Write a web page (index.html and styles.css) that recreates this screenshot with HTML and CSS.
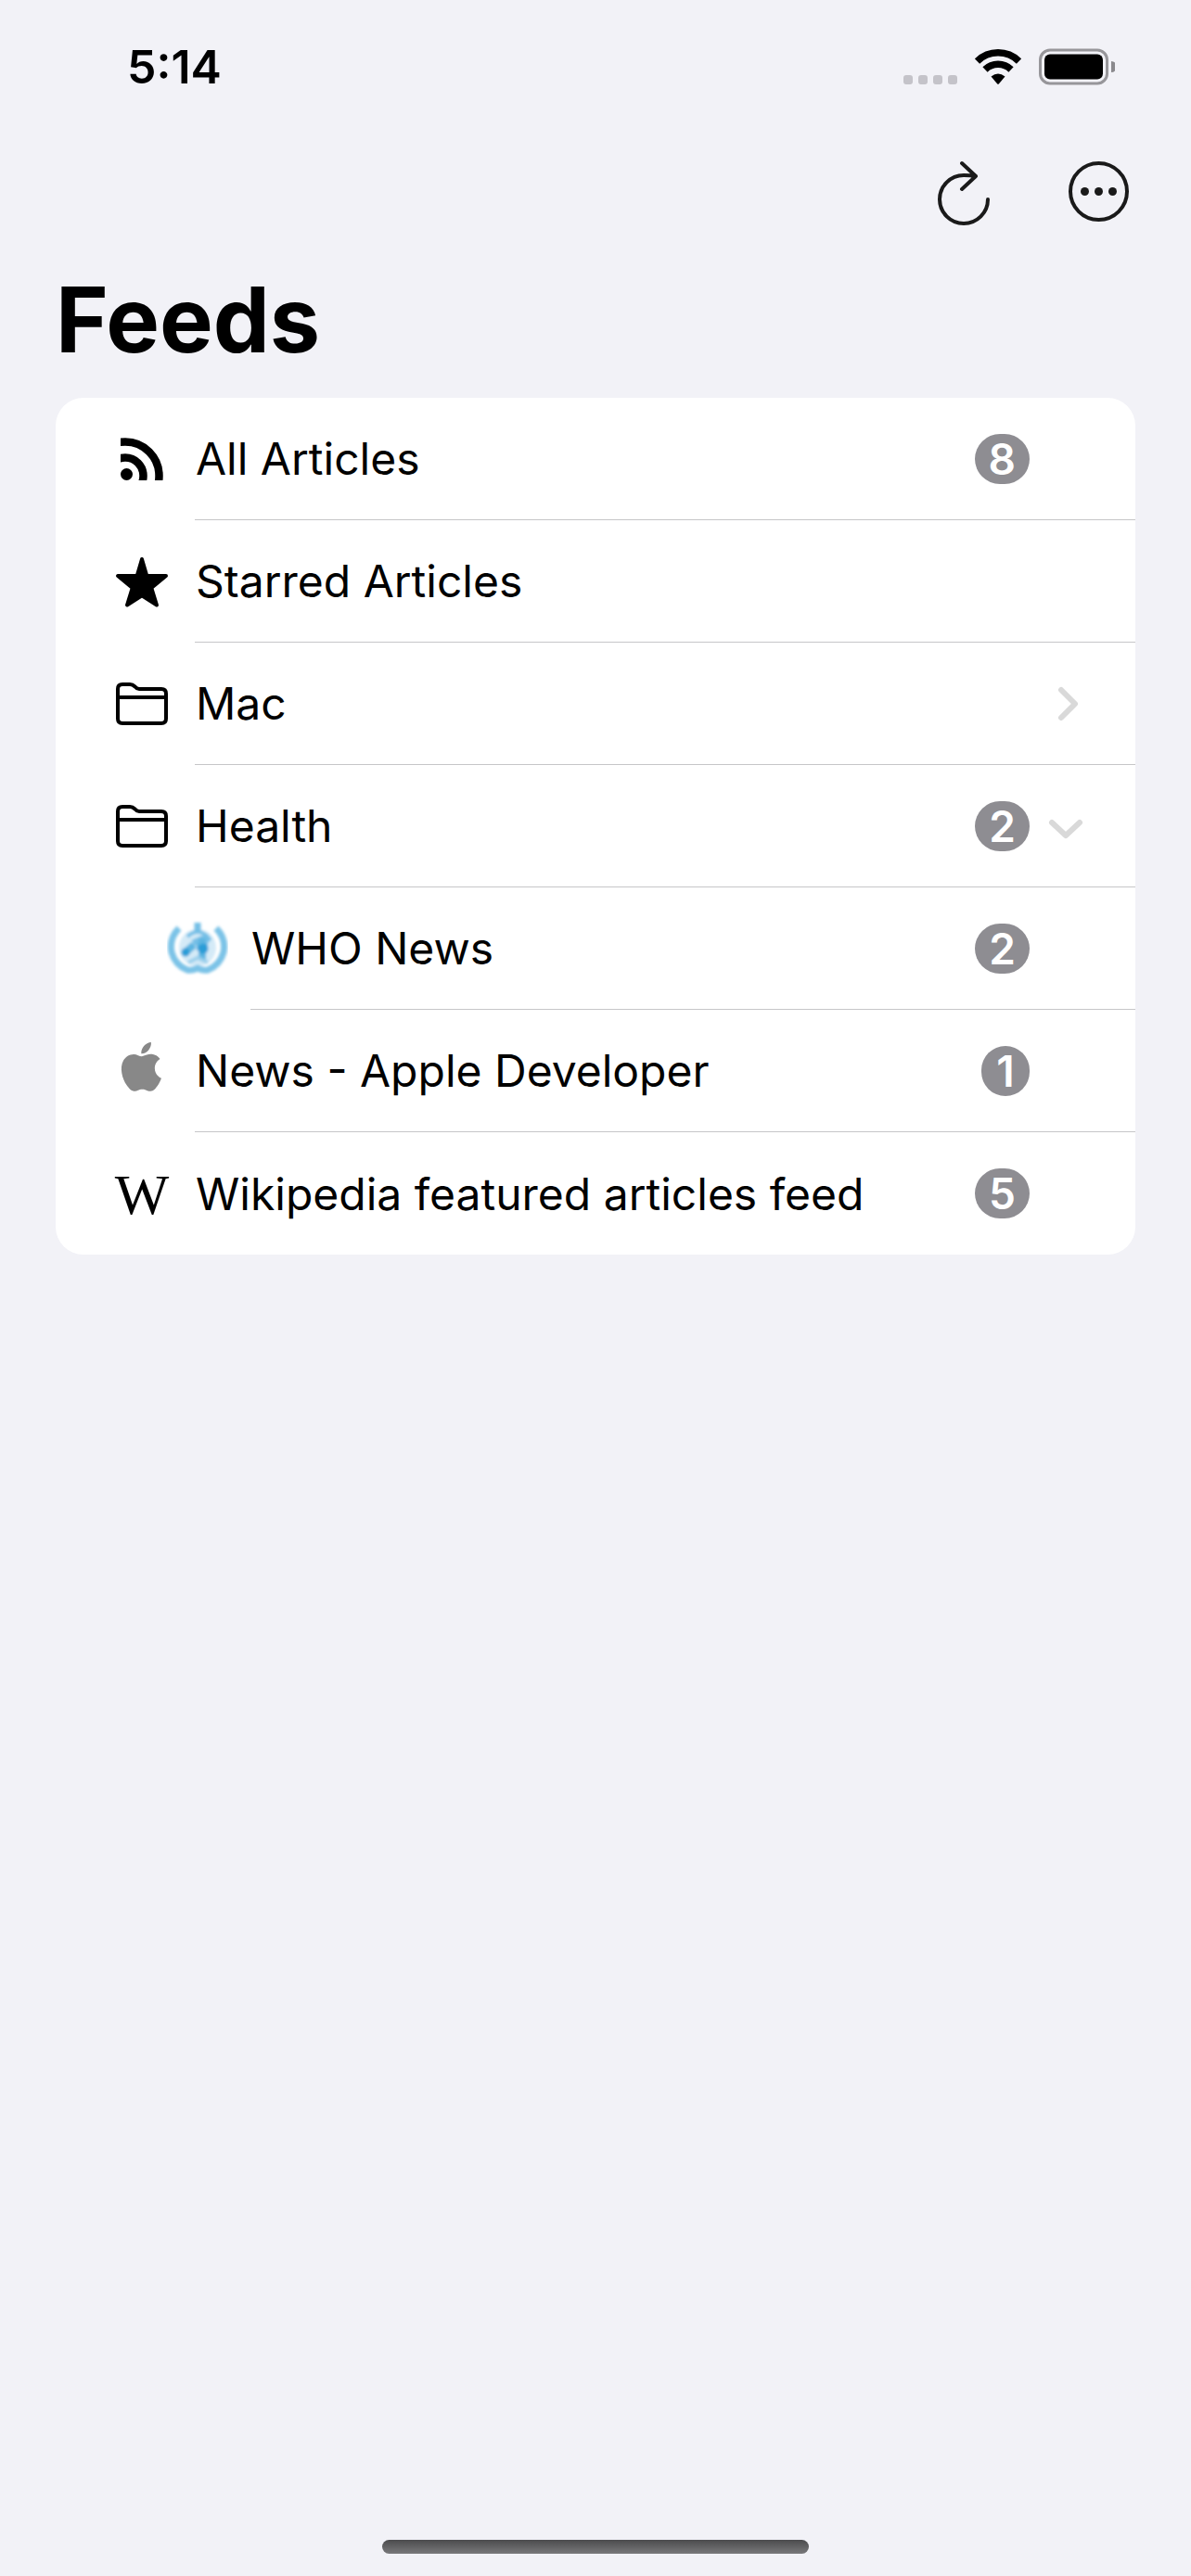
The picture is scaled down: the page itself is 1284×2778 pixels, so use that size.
FILE: index.html
```html
<!DOCTYPE html>
<html lang="en">
<head>
<meta charset="utf-8">
<meta name="viewport" content="width=device-width, initial-scale=1">
<title>Feeds</title>
<link rel="stylesheet" href="styles.css">
</head>
<body>
<div class="screen">
  <header>
    <div class="status">
      <time class="clock">5:14</time>
      <div class="indicators">
        <svg class="cell" viewBox="0 0 58 40" aria-hidden="true">
          <g fill="#c4c3c9"><rect y="29" width="10" height="10" rx="3"/><rect x="16" y="29" width="10" height="10" rx="3"/><rect x="32" y="29" width="10" height="10" rx="3"/><rect x="48" y="29" width="10" height="10" rx="3"/></g>
        </svg>
        <svg class="wifi" viewBox="0 0 50 40" aria-hidden="true">
          <g fill="none" stroke="#000" stroke-width="7.5">
            <path d="M2.5 14A32 32 0 0 1 47.5 14"/>
            <path d="M11 23A20 20 0 0 1 39 23"/>
          </g>
          <path d="M17.500 30.500Q25 24.500 32.500 30.500L26 38.300Q25 39.300 24 38.300Z"/>
        </svg>
        <svg class="battery" viewBox="0 0 82 40" aria-hidden="true">
          <rect x="1.500" y="2" width="72" height="36" rx="10.500" fill="none" stroke="#97969a" stroke-width="3"/>
          <rect x="6" y="6.500" width="63" height="27" rx="6"/>
          <path d="M78 14a6 6 0 0 1 0 12z" fill="#8a898d"/>
        </svg>
      </div>
    </div>
    <div class="toolbar">
      <button class="tool" type="button" aria-label="Refresh">
        <svg viewBox="0 0 72 72"><path d="M61 45A26 26 0 1 1 35 19Q42 19 48 20M33 6L48 20L33 34"/></svg>
      </button>
      <button class="tool" type="button" aria-label="More">
        <svg viewBox="0 0 72 72"><circle cx="36.500" cy="36.500" r="30.500"/><g class="dots"><circle cx="21.500" cy="36.500" r="4.500"/><circle cx="36.500" cy="36.500" r="4.500"/><circle cx="51.500" cy="36.500" r="4.500"/></g></svg>
      </button>
    </div>
    <h1 class="title">Feeds</h1>
  </header>

  <main>
    <ul class="feeds">
      <li class="feed">
        <svg class="icon" viewBox="0 0 66 66" aria-hidden="true">
          <clipPath id="quarter"><path d="M10 5H60V56H10Z"/></clipPath>
          <circle cx="16.500" cy="49.500" r="6.500"/>
          <g clip-path="url(#quarter)" fill="none" stroke="#000" stroke-width="8.500"><circle cx="15" cy="51" r="19.500"/><circle cx="15" cy="51" r="36.500"/></g>
        </svg>
        <div class="body"><a class="name" href="#all">All Articles</a><span class="count">8</span><span class="end"></span></div>
      </li>
      <li class="feed">
        <svg class="icon" viewBox="0 0 66 66" aria-hidden="true">
          <path d="M33 9L38.300 27H59L43.300 40L49 58.500L33 48.200L17 58.500L22.700 40L7 27H27.700Z" stroke="#000" stroke-width="4" stroke-linejoin="round"/>
        </svg>
        <div class="body"><a class="name" href="#starred">Starred Articles</a></div>
      </li>
      <li class="feed">
        <svg class="icon" viewBox="0 0 66 66" aria-hidden="true">
          <path class="folder" d="M7 17Q7 12 12 12H20Q23 12 25.500 14.500Q27.500 17 30 17H54Q59 17 59 22V49Q59 54 54 54H12Q7 54 7 49ZM7 26H59"/>
        </svg>
        <div class="body"><a class="name" href="#mac">Mac</a>
          <button class="end" type="button" aria-label="Expand Mac" aria-expanded="false"><svg viewBox="0 0 44 44"><path d="M16 7L31 22L16 37"/></svg></button></div>
      </li>
      <li class="feed">
        <svg class="icon" viewBox="0 0 66 66" aria-hidden="true">
          <path class="folder" d="M7 17Q7 12 12 12H20Q23 12 25.500 14.500Q27.500 17 30 17H54Q59 17 59 22V49Q59 54 54 54H12Q7 54 7 49ZM7 26H59"/>
        </svg>
        <div class="body"><a class="name" href="#health">Health</a><span class="count">2</span>
          <button class="end" type="button" aria-label="Collapse Health" aria-expanded="true"><svg viewBox="0 0 44 44"><path d="M6 18L21 32L36 18"/></svg></button></div>
      </li>
      <li class="feed nested">
        <svg class="icon" viewBox="0 0 66 66" aria-hidden="true">
          <filter id="soft"><feGaussianBlur stdDeviation="1.500"/></filter>
          <g filter="url(#soft)" fill="none" stroke="#74bfe6">
            <circle cx="33" cy="32" r="20" fill="#d4eaf7" stroke="none"/>
            <path stroke-width="7" stroke="#7cc3e7" d="M13 11Q2 22 5 37Q9 51 22 56Q28 57 33 54Q38 57 44 56Q57 51 61 37Q64 22 53 11"/>
            <path stroke-width="7" d="M33 5V14"/>
            <path stroke-width="4" d="M22 20Q33 10 44 20"/>
            <path stroke-width="7" d="M42 21L28 27M41 20L46 25"/>
            <path stroke-width="8" stroke="#5db5e1" d="M29 29L20 37M38 22V45M32 31H44"/>
            <path stroke-width="4" stroke="#9bd0ec" d="M23 48L33 43L44 48"/>
            <circle cx="20" cy="37" r="4.500" fill="#2b9dd7" stroke="none"/>
            <circle cx="39" cy="33" r="5.500" fill="#2b9dd7" stroke="none"/>
          </g>
        </svg>
        <div class="body"><a class="name" href="#who">WHO News</a><span class="count">2</span><span class="end"></span></div>
      </li>
      <li class="feed">
        <svg class="icon" viewBox="0 0 66 66" aria-hidden="true">
          <path transform="translate(6 2) scale(2.200)" fill="#888" d="M12.152 6.896c-.948 0-2.415-1.078-3.960-1.040-2.040.027-3.910 1.183-4.961 3.014-2.117 3.675-.546 9.103 1.519 12.090 1.013 1.454 2.208 3.090 3.792 3.039 1.520-.065 2.090-.987 3.935-.987 1.831 0 2.350.987 3.960.948 1.637-.026 2.676-1.480 3.676-2.948 1.156-1.688 1.636-3.325 1.662-3.415-.039-.013-3.182-1.221-3.220-4.857-.026-3.040 2.480-4.494 2.597-4.559-1.429-2.090-3.623-2.324-4.390-2.376-2-.156-3.675 1.090-4.610 1.090zM15.530 3.830c.843-1.012 1.400-2.427 1.245-3.830-1.207.052-2.662.805-3.532 1.818-.780.896-1.454 2.338-1.273 3.714 1.338.104 2.715-.688 3.559-1.701"/>
        </svg>
        <div class="body"><a class="name" href="#apple">News - Apple Developer</a><span class="count">1</span><span class="end"></span></div>
      </li>
      <li class="feed">
        <svg class="icon wiki" viewBox="0 0 66 66" aria-hidden="true">
          <text x="33" y="55" text-anchor="middle">W</text>
        </svg>
        <div class="body"><a class="name" href="#wikipedia">Wikipedia featured articles feed</a><span class="count">5</span><span class="end"></span></div>
      </li>
    </ul>
  </main>

  <footer class="home"><span class="grip"></span></footer>
</div>
</body>
</html>
```

FILE: styles.css
```css
* { box-sizing: border-box; }

body {
  margin: 0;
  background: #f2f2f7;
  color: #000;
  font-family: Inter, "Liberation Sans", sans-serif;
}

.screen {
  display: flex;
  flex-direction: column;
  min-height: 100vh;
}

svg { display: block; flex: none; }

button {
  border: 0;
  padding: 0;
  background: none;
}

main { flex: 1; padding: 0 60px; }

/* Status bar */
.status {
  display: flex;
  align-items: center;
  justify-content: space-between;
  height: 144px;
  padding: 0 82px 0 137px;
}

.clock { font-size: 50px; font-weight: 600; }

.indicators { display: flex; gap: 19px; }
.cell { width: 58px; height: 40px; }
.wifi { width: 50px; height: 40px; }
.battery { width: 82px; height: 40px; }

/* Toolbar and title */
.toolbar {
  display: flex;
  align-items: center;
  justify-content: flex-end;
  gap: 72px;
  height: 124px;
  padding: 0 64px;
}

.tool { width: 72px; height: 72px; }

.tool svg {
  overflow: visible;
  fill: none;
  stroke: #1a1a1a;
  stroke-width: 4;
  stroke-linecap: round;
  stroke-linejoin: round;
}

.tool .dots { fill: #1a1a1a; stroke: none; }

.title {
  margin: 17px 0 24px;
  padding: 0 60px;
  font-size: 97px;
  font-weight: 700;
  line-height: 120px;
}

/* Feed list */
.feeds {
  margin: 0;
  padding: 0;
  overflow: hidden;
  list-style: none;
  background: #fff;
  border-radius: 30px;
}

.feed {
  display: flex;
  align-items: center;
  gap: 24px;
  padding-left: 60px;
}

.nested { padding-left: 120px; }

.icon { width: 66px; height: 66px; }

.folder {
  fill: none;
  stroke: #000;
  stroke-width: 4;
  stroke-linejoin: round;
}

.wiki {
  font-family: "Liberation Serif", serif;
  font-size: 62px;
}

.body {
  display: flex;
  flex: 1;
  align-items: center;
  height: 132px;
  border-bottom: 1px solid #c6c6c8;
}

.feed:last-child .body { border-bottom: 0; }

.name {
  flex: 1;
  padding-left: 1px;
  color: inherit;
  font-size: 48px;
  text-decoration: none;
}

.count {
  min-width: 52px;
  padding: 0 15px;
  border-radius: 27px;
  background: #8e8d92;
  color: #fff;
  font-size: 46px;
  font-weight: 600;
  line-height: 54px;
  text-align: center;
}

.end { width: 114px; padding-left: 18px; }

.end svg {
  width: 44px;
  height: 44px;
  fill: none;
  stroke: #d9d9d9;
  stroke-width: 6;
  stroke-linecap: round;
  stroke-linejoin: round;
}

/* Home indicator */
.home {
  display: flex;
  justify-content: center;
  padding: 0 4px 24px;
}

.grip {
  width: 36%;
  height: 15px;
  border-radius: 8px;
  background: linear-gradient(#4b4b4d, #79797b);
}
```
